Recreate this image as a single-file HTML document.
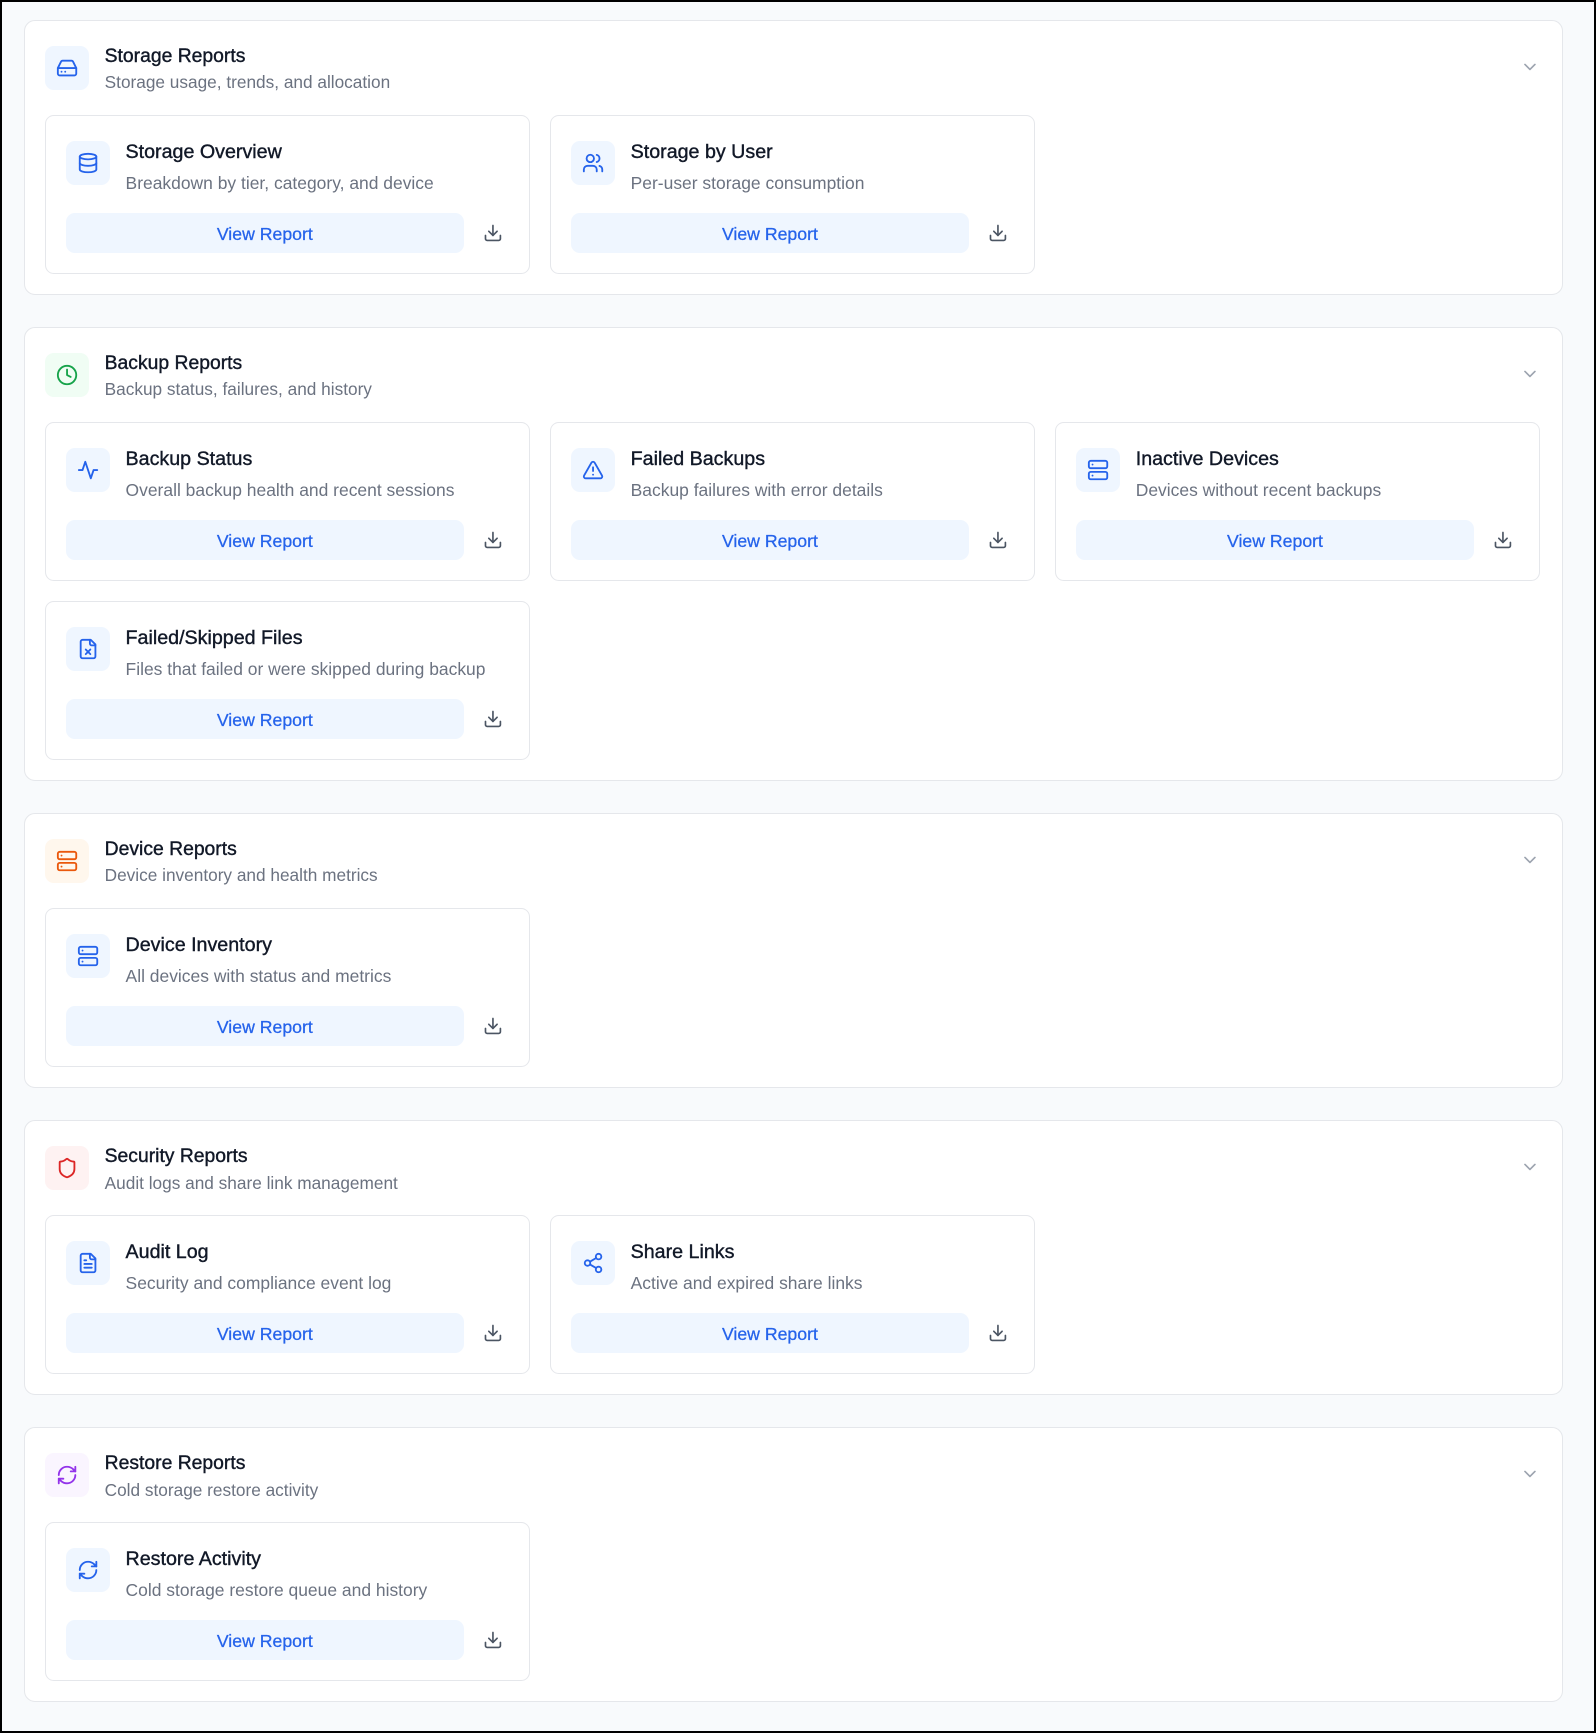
<!DOCTYPE html>
<html><head><meta charset="utf-8"><style>
*{box-sizing:border-box;margin:0;padding:0}
html,body{width:1596px;height:1733px;overflow:hidden;background:#000}
#w{zoom:1.10526;width:1444px;height:1568px;border:2px solid #000;background:#f8fafc;padding:16px 0 0 20px;font-family:"Liberation Sans",sans-serif;position:relative}
.sec{width:1392px;background:#fff;border:1px solid #e5e7eb;border-radius:10px;padding:23px 18px 18px;margin-bottom:29px;position:relative}
.hd{display:flex;height:40px;margin-bottom:22px}
.ib{width:40px;height:40px;border-radius:8px;display:flex;align-items:center;justify-content:center;flex:none}
.ib svg{width:20px;height:20px;fill:none;stroke:currentColor;stroke-width:2;stroke-linecap:round;stroke-linejoin:round}
.tx{margin-left:14px}
.st{font-size:17.5px;line-height:20px;margin-top:-1px;color:#111827;-webkit-text-stroke:0.35px #111827}
.ss{font-size:15.6px;line-height:22px;margin-top:3px;color:#6b7280}
.chev{position:absolute;right:20px;top:33px;width:18px;height:18px;fill:none;stroke:#9ca3af;stroke-width:2;stroke-linecap:round;stroke-linejoin:round}
.grid{display:grid;grid-template-columns:439px 439px 439px;column-gap:18px;row-gap:18px}
.card{border:1px solid #e5e7eb;border-radius:8px;padding:23px 18px 18px;height:144px}
.ch{display:flex;height:40px;margin-bottom:25px}
.ch .ib{background:#eff6ff;color:#2563eb}
.ct{font-size:17.8px;line-height:20px;margin-top:0px;color:#111827;-webkit-text-stroke:0.35px #111827}
.cs{font-size:15.8px;line-height:22px;margin-top:7px;color:#6b7280}
.br{display:flex;align-items:center}
.btn{width:360px;height:36px;border-radius:8px;background:#eff6ff;color:#2563eb;font-size:16px;display:flex;align-items:center;justify-content:center;padding-top:3px;-webkit-text-stroke:0.25px #2563eb}
.dl{margin-left:17px;width:18px;height:18px;fill:none;stroke:#4b5563;stroke-width:2;stroke-linecap:round;stroke-linejoin:round}
</style></head><body><div id="w">
<svg width="0" height="0" style="position:absolute"><defs>
<symbol id="d" viewBox="0 0 24 24"><path d="M21 15v4a2 2 0 0 1-2 2H5a2 2 0 0 1-2-2v-4"/><polyline points="7 10 12 15 17 10"/><line x1="12" y1="15" x2="12" y2="3"/></symbol>
<symbol id="c" viewBox="0 0 24 24"><path d="m6 9 6 6 6-6"/></symbol>
</defs></svg>

<div class="sec">
<div class="hd"><div class="ib" style="background:#eff6ff;color:#2563eb"><svg viewBox="0 0 24 24"><line x1="22" y1="12" x2="2" y2="12"/><path d="M5.45 5.11 2 12v6a2 2 0 0 0 2 2h16a2 2 0 0 0 2-2v-6l-3.45-6.89A2 2 0 0 0 16.76 4H7.240a2 2 0 0 0-1.79 1.11z"/><line x1="6" y1="16" x2="6.01" y2="16"/><line x1="10" y1="16" x2="10.01" y2="16"/></svg></div><div class="tx"><div class="st">Storage Reports</div><div class="ss">Storage usage, trends, and allocation</div></div></div>
<svg class="chev"><use href="#c"/></svg>
<div class="grid">
<div class="card"><div class="ch"><div class="ib"><svg viewBox="0 0 24 24"><ellipse cx="12" cy="5" rx="9" ry="3"/><path d="M3 5V19A9 3 0 0 0 21 19V5"/><path d="M3 12A9 3 0 0 0 21 12"/></svg></div><div class="tx"><div class="ct">Storage Overview</div><div class="cs">Breakdown by tier, category, and device</div></div></div><div class="br"><div class="btn">View Report</div><svg class="dl"><use href="#d"/></svg></div></div>
<div class="card"><div class="ch"><div class="ib"><svg viewBox="0 0 24 24"><path d="M16 21v-2a4 4 0 0 0-4-4H6a4 4 0 0 0-4 4v2"/><circle cx="9" cy="7" r="4"/><path d="M22 21v-2a4 4 0 0 0-3-3.87"/><path d="M16 3.13a4 4 0 0 1 0 7.75"/></svg></div><div class="tx"><div class="ct">Storage by User</div><div class="cs">Per-user storage consumption</div></div></div><div class="br"><div class="btn">View Report</div><svg class="dl"><use href="#d"/></svg></div></div>
</div></div>

<div class="sec">
<div class="hd"><div class="ib" style="background:#f0fdf4;color:#16a34a"><svg viewBox="0 0 24 24"><circle cx="12" cy="12" r="10"/><polyline points="12 6 12 12 16 14"/></svg></div><div class="tx"><div class="st">Backup Reports</div><div class="ss">Backup status, failures, and history</div></div></div>
<svg class="chev"><use href="#c"/></svg>
<div class="grid">
<div class="card"><div class="ch"><div class="ib"><svg viewBox="0 0 24 24"><path d="M22 12h-4l-3 9L9 3l-3 9H2"/></svg></div><div class="tx"><div class="ct">Backup Status</div><div class="cs">Overall backup health and recent sessions</div></div></div><div class="br"><div class="btn">View Report</div><svg class="dl"><use href="#d"/></svg></div></div>
<div class="card"><div class="ch"><div class="ib"><svg viewBox="0 0 24 24"><path d="m21.73 18-8-14a2 2 0 0 0-3.48 0l-8 14A2 2 0 0 0 4 21h16a2 2 0 0 0 1.73-3Z"/><path d="M12 9v4"/><path d="M12 17h.01"/></svg></div><div class="tx"><div class="ct">Failed Backups</div><div class="cs">Backup failures with error details</div></div></div><div class="br"><div class="btn">View Report</div><svg class="dl"><use href="#d"/></svg></div></div>
<div class="card"><div class="ch"><div class="ib"><svg viewBox="0 0 24 24"><rect x="2" y="2" width="20" height="8" rx="2"/><rect x="2" y="14" width="20" height="8" rx="2"/><line x1="6" y1="6" x2="6.01" y2="6"/><line x1="6" y1="18" x2="6.01" y2="18"/></svg></div><div class="tx"><div class="ct">Inactive Devices</div><div class="cs">Devices without recent backups</div></div></div><div class="br"><div class="btn">View Report</div><svg class="dl"><use href="#d"/></svg></div></div>
<div class="card"><div class="ch"><div class="ib"><svg viewBox="0 0 24 24"><path d="M15 2H6a2 2 0 0 0-2 2v16a2 2 0 0 0 2 2h12a2 2 0 0 0 2-2V7Z"/><path d="M14 2v4a2 2 0 0 0 2 2h4"/><path d="m14.5 12.5-5 5"/><path d="m9.5 12.5 5 5"/></svg></div><div class="tx"><div class="ct">Failed/Skipped Files</div><div class="cs">Files that failed or were skipped during backup</div></div></div><div class="br"><div class="btn">View Report</div><svg class="dl"><use href="#d"/></svg></div></div>
</div></div>

<div class="sec">
<div class="hd"><div class="ib" style="background:#fff7ed;color:#ea580c"><svg viewBox="0 0 24 24"><rect x="2" y="2" width="20" height="8" rx="2"/><rect x="2" y="14" width="20" height="8" rx="2"/><line x1="6" y1="6" x2="6.01" y2="6"/><line x1="6" y1="18" x2="6.01" y2="18"/></svg></div><div class="tx"><div class="st">Device Reports</div><div class="ss">Device inventory and health metrics</div></div></div>
<svg class="chev"><use href="#c"/></svg>
<div class="grid">
<div class="card"><div class="ch"><div class="ib"><svg viewBox="0 0 24 24"><rect x="2" y="2" width="20" height="8" rx="2"/><rect x="2" y="14" width="20" height="8" rx="2"/><line x1="6" y1="6" x2="6.01" y2="6"/><line x1="6" y1="18" x2="6.01" y2="18"/></svg></div><div class="tx"><div class="ct">Device Inventory</div><div class="cs">All devices with status and metrics</div></div></div><div class="br"><div class="btn">View Report</div><svg class="dl"><use href="#d"/></svg></div></div>
</div></div>

<div class="sec">
<div class="hd"><div class="ib" style="background:#fef2f2;color:#dc2626"><svg viewBox="0 0 24 24"><path d="M20 13c0 5-3.5 7.5-7.66 8.95a1 1 0 0 1-.67-.01C7.5 20.5 4 18 4 13V6a1 1 0 0 1 1-1c2 0 4.5-1.2 6.24-2.72a1.170 1.17 0 0 1 1.52 0C14.51 3.81 17 5 19 5a1 1 0 0 1 1 1z"/></svg></div><div class="tx"><div class="st">Security Reports</div><div class="ss">Audit logs and share link management</div></div></div>
<svg class="chev"><use href="#c"/></svg>
<div class="grid">
<div class="card"><div class="ch"><div class="ib"><svg viewBox="0 0 24 24"><path d="M15 2H6a2 2 0 0 0-2 2v16a2 2 0 0 0 2 2h12a2 2 0 0 0 2-2V7Z"/><path d="M14 2v4a2 2 0 0 0 2 2h4"/><path d="M10 9H8"/><path d="M16 13H8"/><path d="M16 17H8"/></svg></div><div class="tx"><div class="ct">Audit Log</div><div class="cs">Security and compliance event log</div></div></div><div class="br"><div class="btn">View Report</div><svg class="dl"><use href="#d"/></svg></div></div>
<div class="card"><div class="ch"><div class="ib"><svg viewBox="0 0 24 24"><circle cx="18" cy="5" r="3"/><circle cx="6" cy="12" r="3"/><circle cx="18" cy="19" r="3"/><line x1="8.59" y1="13.51" x2="15.42" y2="17.49"/><line x1="15.41" y1="6.51" x2="8.59" y2="10.49"/></svg></div><div class="tx"><div class="ct">Share Links</div><div class="cs">Active and expired share links</div></div></div><div class="br"><div class="btn">View Report</div><svg class="dl"><use href="#d"/></svg></div></div>
</div></div>

<div class="sec">
<div class="hd"><div class="ib" style="background:#faf5ff;color:#9333ea"><svg viewBox="0 0 24 24"><path d="M3 12a9 9 0 0 1 9-9 9.75 9.75 0 0 1 6.74 2.74L21 8"/><path d="M21 3v5h-5"/><path d="M21 12a9 9 0 0 1-9 9 9.75 9.75 0 0 1-6.74-2.74L3 16"/><path d="M8 16H3v5"/></svg></div><div class="tx"><div class="st">Restore Reports</div><div class="ss">Cold storage restore activity</div></div></div>
<svg class="chev"><use href="#c"/></svg>
<div class="grid">
<div class="card"><div class="ch"><div class="ib"><svg viewBox="0 0 24 24"><path d="M3 12a9 9 0 0 1 9-9 9.75 9.75 0 0 1 6.74 2.74L21 8"/><path d="M21 3v5h-5"/><path d="M21 12a9 9 0 0 1-9 9 9.75 9.75 0 0 1-6.74-2.74L3 16"/><path d="M8 16H3v5"/></svg></div><div class="tx"><div class="ct">Restore Activity</div><div class="cs">Cold storage restore queue and history</div></div></div><div class="br"><div class="btn">View Report</div><svg class="dl"><use href="#d"/></svg></div></div>
</div></div>

</div></body></html>
